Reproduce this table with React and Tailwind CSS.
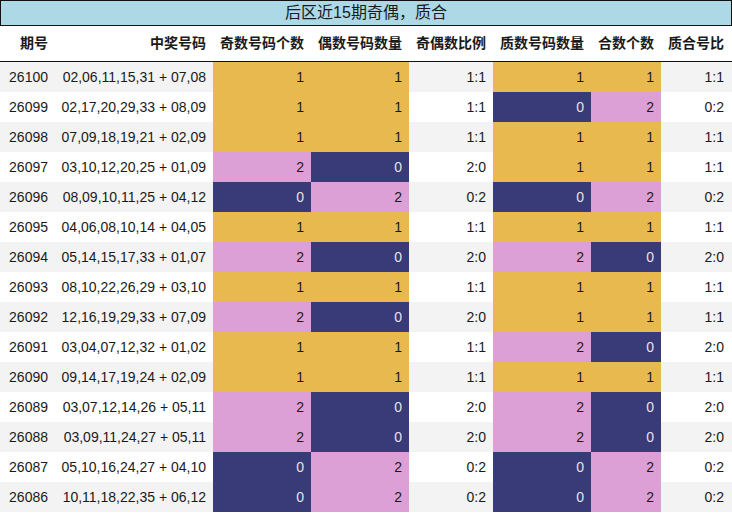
const rows = [
  ['26100', '02,06,11,15,31 + 07,08', 1, 1, '1:1', 1, 1, '1:1'],
  ['26099', '02,17,20,29,33 + 08,09', 1, 1, '1:1', 0, 2, '0:2'],
  ['26098', '07,09,18,19,21 + 02,09', 1, 1, '1:1', 1, 1, '1:1'],
  ['26097', '03,10,12,20,25 + 01,09', 2, 0, '2:0', 1, 1, '1:1'],
  ['26096', '08,09,10,11,25 + 04,12', 0, 2, '0:2', 0, 2, '0:2'],
  ['26095', '04,06,08,10,14 + 04,05', 1, 1, '1:1', 1, 1, '1:1'],
  ['26094', '05,14,15,17,33 + 01,07', 2, 0, '2:0', 2, 0, '2:0'],
  ['26093', '08,10,22,26,29 + 03,10', 1, 1, '1:1', 1, 1, '1:1'],
  ['26092', '12,16,19,29,33 + 07,09', 2, 0, '2:0', 1, 1, '1:1'],
  ['26091', '03,04,07,12,32 + 01,02', 1, 1, '1:1', 2, 0, '2:0'],
  ['26090', '09,14,17,19,24 + 02,09', 1, 1, '1:1', 1, 1, '1:1'],
  ['26089', '03,07,12,14,26 + 05,11', 2, 0, '2:0', 2, 0, '2:0'],
  ['26088', '03,09,11,24,27 + 05,11', 2, 0, '2:0', 2, 0, '2:0'],
  ['26087', '05,10,16,24,27 + 04,10', 0, 2, '0:2', 0, 2, '0:2'],
  ['26086', '10,11,18,22,35 + 06,12', 0, 2, '0:2', 0, 2, '0:2'],
]

const headers = ['期号', '中奖号码', '奇数号码个数', '偶数号码数量', '奇偶数比例', '质数号码数量', '合数个数', '质合号比']

// cell colour by count: 1 gold, 2 pink, 0 navy
const countStyle = {
  0: 'bg-[#393a78] text-[#e4e4ee]',
  1: 'bg-[#e8b94f] text-[#1a1a1a]',
  2: 'bg-[#dda0d6] text-[#1a1a1a]',
}

const grid = 'grid grid-cols-[55px_158px_98px_98px_84px_98px_70px_70px]'

function Cell({ children, className = '' }) {
  return (
    <div className={`flex h-[30px] items-center justify-end pr-[7px] ${className}`}>
      {children}
    </div>
  )
}

export default function App() {
  return (
    <div
      className="w-[732px] h-[513px] bg-white text-[#1a1a1a] overflow-hidden"
      style={{ fontFamily: '"Liberation Sans", "Noto Sans CJK SC", sans-serif' }}
    >
      {/* Title */}
      <div className="h-[26px] border border-[#111] bg-[#add8e6] flex items-center justify-center text-[16px] leading-none">
        后区近15期奇偶，质合
      </div>

      {/* Header */}
      <div className={`${grid} h-[36px] border-b border-[#111] font-bold text-[14px]`}>
        {headers.map((h) => (
          <div key={h} className="flex items-center justify-end pr-[7px]">
            {h}
          </div>
        ))}
      </div>

      {/* Rows */}
      <div className="text-[14px]">
        {rows.map((r, i) => (
          <div key={r[0]} className={`${grid} ${i % 2 === 0 ? 'bg-[#f3f3f3]' : 'bg-white'}`}>
            <Cell>{r[0]}</Cell>
            <Cell>{r[1]}</Cell>
            <Cell className={countStyle[r[2]]}>{r[2]}</Cell>
            <Cell className={countStyle[r[3]]}>{r[3]}</Cell>
            <Cell>{r[4]}</Cell>
            <Cell className={countStyle[r[5]]}>{r[5]}</Cell>
            <Cell className={countStyle[r[6]]}>{r[6]}</Cell>
            <Cell>{r[7]}</Cell>
          </div>
        ))}
      </div>
    </div>
  )
}
